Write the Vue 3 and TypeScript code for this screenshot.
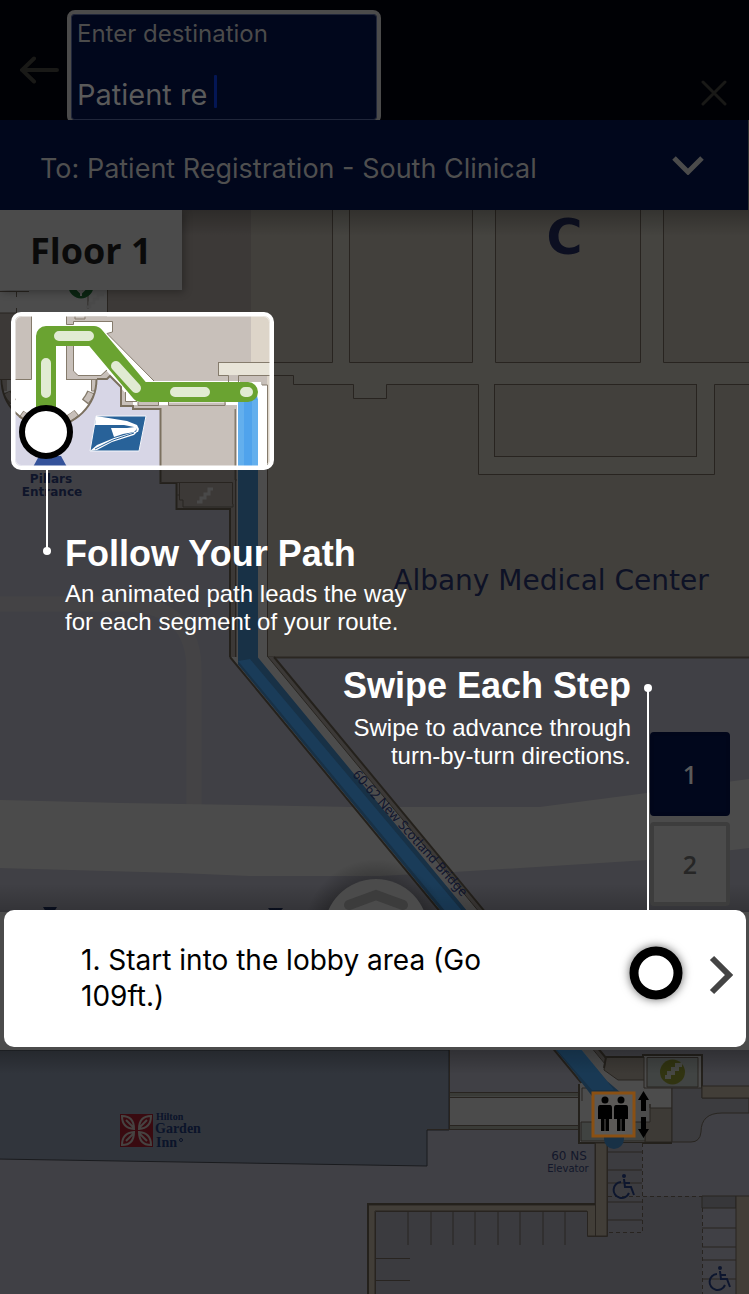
<script setup lang="ts">
import { ref } from 'vue'

interface Floor {
  id: number
  label: string
}

const destination = ref<string>('Patient re')
const activeFloor = ref<number>(1)
const floors: Floor[] = [
  { id: 1, label: '1' },
  { id: 2, label: '2' },
]
const stalls: number[] = [408, 431, 453, 475, 498, 520, 543, 565]
const accessibleStalls: number[] = [1152, 1170, 1183, 1202, 1220]
const rightStalls: number[] = [1228, 1247, 1260, 1279]
</script>

<template>
  <main class="app">
    <header class="search-bar">
      <button class="icon-button back" type="button" aria-label="Back">
        <svg width="40" height="28" viewBox="0 0 40 28">
          <path d="M2 14H37M14 2.500L2 14L14 25.500" class="stroke-dim" />
        </svg>
      </button>
      <div class="field">
        <label for="destination">Enter destination</label>
        <input id="destination" v-model="destination" type="text" autocomplete="off" />
        <span class="caret"></span>
      </div>
      <button class="icon-button clear" type="button" aria-label="Clear">
        <svg width="26" height="26" viewBox="0 0 26 26">
          <path d="M2 2L24 24M24 2L2 24" class="stroke-dim" />
        </svg>
      </button>
    </header>

    <button class="destination-bar" type="button">
      <span>To: Patient Registration - South Clinical</span>
      <svg width="32" height="20" viewBox="0 0 32 20">
        <path d="M2 3L16 17L30 3" fill="none" stroke="#4b4b4b" stroke-width="5" />
      </svg>
    </button>

    <section class="stage">
      <svg class="map" viewBox="0 210 749 1084" preserveAspectRatio="xMidYMin slice" role="img" aria-label="Floor map">
        <defs>
          <clipPath id="spot"><rect x="14" y="315" width="257" height="152" rx="7" /></clipPath>
          <linearGradient id="fadeDown" x1="0" y1="0" x2="0" y2="1">
            <stop offset="0" stop-color="#000" stop-opacity="0.25" />
            <stop offset="1" stop-color="#000" stop-opacity="0" />
          </linearGradient>
          <linearGradient id="fadeUp" x1="0" y1="1" x2="0" y2="0">
            <stop offset="0" stop-color="#000" stop-opacity="0.2" />
            <stop offset="1" stop-color="#000" stop-opacity="0" />
          </linearGradient>
          <radialGradient id="halo">
            <stop offset="0.7" stop-color="#000" stop-opacity="0.25" />
            <stop offset="1" stop-color="#000" stop-opacity="0" />
          </radialGradient>
          <g id="wheelchair">
            <circle cx="10" cy="2" r="2" fill="#2c4a9a" />
            <path d="M10 5L11 13H17L20 21M11 9H16M7 8A8 8 0 1 0 15 19" fill="none" stroke="#2c4a9a" stroke-width="2" />
          </g>
        </defs>

        <g id="scene">
          <rect x="0" y="210" width="749" height="1084" fill="#d7d6e6" />

          <!-- side road and main road -->
          <path d="M0 604H130Q194 608 194 670V806" fill="none" stroke="#e3e2e8" stroke-width="15" />
          <path d="M0 800L120 803L350 807H540L647 793L749 779V848L647 860L470 871L380 876H250L180 873L0 868Z" fill="#fcfcfa" />

          <!-- main hospital building -->
          <path d="M251 210H749V657H267V385H251Z" fill="#ddd5c9" />
          <path d="M218 362H333V210H349V362H473V210H495V362H640V210H663V362H749V384H714V474H478V384H386V398H354V384H293V375H239V382H228V375H218Z" fill="#e8e4d8" />
          <path class="wall" d="M218 362.500H332.500V210M349.500 210V362.500H472.500V210M495.500 210V362.500H640.500V210M663.500 210V362.500H749M749 384.500H714.500V474.500H478.500V384.500H386.500V398.500H353.500V384.500H293.500V375.500H267" />
          <rect class="wall" x="494.500" y="384.500" width="202" height="72" style="fill: #ddd5c9" />

          <!-- west wing -->
          <path d="M107 210H251V362H218V375H267V657H230V509H176V483H160V409H133V406H121V387L110 376L107 379H66V313H107Z" fill="#c8c0ba" />
          <path d="M0 290H107V313H0Z" fill="#fff" />
          <path d="M0 313H32V379H0Z" fill="#c8c0ba" />
          <path d="M0 291.500H29M16.500 291V297M16.500 308V313H0M88 290V309M107.500 290V313" class="wall" />
          <path d="M32 300H66V380H32Z" fill="#fff" />
          <path d="M2 379A47 47 0 0 0 96 379Z" fill="#fff" />
          <path d="M5 379V391M94 379V391" stroke="#c8c0ba" stroke-width="4" />
          <path d="M7 392A43 43 0 0 0 13 402M21 414A44 44 0 0 0 30 419M68 419A44 44 0 0 0 77 413M85 402A44 44 0 0 0 91 392" fill="none" stroke="#857b6c" stroke-width="8" />
          <path d="M7 393A43 43 0 0 0 13 401M22 414A44 44 0 0 0 29 418M69 418A44 44 0 0 0 76 413M86 401A44 44 0 0 0 91 393" fill="none" stroke="#c8c0ba" stroke-width="6" />
          <path d="M1.500 379A47.500 47.500 0 0 0 96.500 379" fill="none" stroke="#7b705f" stroke-width="2" />
          <path d="M0 379.500H31.500V313M66 379.500H96M91.500 379V391H95M66.500 379.500V345" class="wall" />
          <path d="M66 313V324.500H73V322H112.500V332L107 333.500L154 381H240V405H226V402.500H168V405H158V402H138V405H133V401H126V394L106 370L101 375H78L73 371V345H66Z" fill="#fff" />
          <path d="M66 346H73V379H66Z" fill="#c8c0ba" />
          <path d="M66.500 316V324.500H73.500V321.500H112.500V332L107 333.500L154 381M73.500 345V371L78 375.500H101L107 370M75 313V319H85V316H107M168.500 402V405.500H225V402M138 402V405.500H158.500V402M66.500 345V379" class="wall" />
          <path d="M218.500 375V362.500H267M218 375.500H228.500V382M238.500 382V375.500H267" class="wall" />
          <path d="M97 379H107L110 376L121 387V406H133V409H160.500V483H176.500V509H230V657" fill="none" stroke="#7b705f" stroke-width="2" />
          <path d="M125.500 392V401.500H137" class="wall" />
          <path d="M160 482.500H232.500V504H233V507H183V500H179.500V482M177 495H179M235 409V480H238" class="wall" />
          <path d="M197 502H201V498H205V494H209V489H213" fill="none" stroke="#f5f5f5" stroke-width="3" />
          <path d="M86 307H90V303H94V299H98V295H104" fill="none" stroke="#f5f5f5" stroke-width="3" />
          <circle cx="81" cy="286" r="12.500" fill="#25803e" />
          <path d="M81 284V296M77 289L81 293L85 289" fill="none" stroke="#fff" stroke-width="2" />

          <!-- bridge -->
          <path d="M237 382H263V385H267V657H237Z" fill="#fff" />
          <path d="M262 382V385H267.500V657M235.500 409V657" class="wall" />
          <path d="M267 657.500H749" fill="none" stroke="#8f8474" stroke-width="2" />
          <path d="M230 657H274L621 1076L600 1104Z" fill="#fff" />
          <path d="M268 657H274L617 1071L612 1072Z" fill="#c8c0ba" />
          <path d="M230 657L584 1086M274 657L611 1064" fill="none" stroke="#7b705f" stroke-width="2" />
          <path d="M268 657L610 1070" class="wall" />
        </g>

        <g id="lower">
          <!-- hotel -->
          <path d="M-4 1050H449V1130H427V1166L-4 1159Z" fill="#a5b1c8" stroke="#555a64" stroke-width="1" />
          <path d="M449 1092H579V1130H449Z" fill="#fbfbfb" />
          <path d="M449 1094.500H579M449 1128H579" stroke="#c2c5b8" stroke-width="4" />
          <path d="M449.500 1050V1130M449 1092.500H579M449 1097.500H579M449 1125.500H579M427 1129.500H579" class="wall" />
          <rect x="120" y="1114" width="33" height="33" fill="#c02238" />
          <g fill="none" stroke="#eadfda" stroke-width="2">
            <path d="M134 1129Q122 1128 122 1116Q134 1116 134 1129ZM139 1129Q139 1116 151 1116Q151 1128 139 1129ZM134 1132Q134 1145 122 1145Q122 1133 134 1132ZM139 1132Q151 1133 151 1145Q139 1145 139 1132ZM126 1120L134 1128M147 1120L139 1128M126 1141L134 1133M147 1141L139 1133" />
          </g>
          <g font-family="'Liberation Serif', serif" font-weight="700" fill="#25438c">
            <text x="156" y="1120" font-size="10">Hilton</text>
            <text x="155" y="1133" font-size="14">Garden</text>
            <text x="156" y="1147" font-size="14">Inn</text>
          </g>
          <circle cx="181" cy="1140" r="1.500" fill="none" stroke="#25438c" />

          <!-- elevator lobby -->
          <path d="M579 1084L600 1075L612 1057H643V1055H702V1088H672V1143H579Z" fill="#fff" />
          <path d="M606 1057H644V1080H618L604 1070Z" fill="#cdc2b6" class="outlined" />
          <path d="M647 1057.500H698V1087H647Z" fill="#dbe3df" class="outlined" />
          <path d="M650 1104V1108H672V1142H645V1122H650Z" fill="#cdc2b6" class="outlined" />
          <path d="M581 1122H645V1141H581Z" fill="#d6dfda" class="outlined" />
          <path d="M582 1101V1088H592M644 1080V1088H672V1108" class="wall" />
          <path d="M579 1084V1143H672M606 1057H643V1055H702V1088M606 1057L604 1068" fill="none" stroke="#7b705f" stroke-width="2" />
          <path d="M672 1088H702V1098H749V1113H722Q701 1113 701 1132Q700 1142 691 1142H672Z" fill="#c9c8d2" class="outlined" />
          <path d="M702 1086H752V1098H702Z" fill="#ddd0bc" class="outlined" />
          <circle cx="672.500" cy="1072" r="12.500" fill="#a5b03b" />
          <path d="M665 1077H669V1073H673V1069H677V1065H682" fill="none" stroke="#eef0e4" stroke-width="4" />

          <!-- parking -->
          <path d="M368 1205H595V1143H607V1236H587V1211H375V1298H368Z" fill="#ddd0bc" class="outlined" />
          <path d="M375 1211H587V1236H607V1196H702V1294H375Z" fill="#c6c5d4" />
          <path d="M607 1143H642V1232H607Z" fill="#c9c8d6" />
          <path d="M702 1196H736V1208H702Z" fill="#b9b8c4" class="outlined" />
          <path d="M736 1196H752V1298H736Z" fill="#ddd0bc" class="outlined" />
          <path d="M375.500 1294V1211.500H587.500V1236.500H607.500V1143M595.500 1143V1236" class="wall" />
          <path d="M368 1294V1204H595" fill="none" stroke="#7b705f" stroke-width="2" />
          <line v-for="x in stalls" :key="'s' + x" :x1="x" y1="1211" :x2="x" y2="1245" class="wall" />
          <path d="M375 1258.500H410M375 1280.500H410" class="wall" />
          <line v-for="y in accessibleStalls" :key="'a' + y" x1="608" :y1="y" x2="642" :y2="y" class="wall" />
          <line v-for="y in rightStalls" :key="'r' + y" x1="702" :y1="y" x2="736" :y2="y" class="wall" />
          <path d="M642.500 1143V1232.500H608M608 1196.500H702M702.500 1208V1294" class="wall" stroke-dasharray="4 3" />
          <use href="#wheelchair" x="614" y="1174" />
          <use href="#wheelchair" x="710" y="1266" />
          <path d="M43 907H57L54 912H46ZM268 908H283L280 912H271Z" fill="#22366e" />
        </g>

        <path id="blueRoute" d="M248 400V661L600 1088L614 1100V1139" fill="none" stroke="#50a3ec" stroke-width="20" stroke-linecap="round" />
        <path d="M586 1072L606 1098" stroke="#50a3ec" stroke-width="20" />

        <g fill="#28346e" font-family="'DejaVu Sans', Verdana, sans-serif">
          <text x="564.500" y="254" font-size="49" font-weight="700" text-anchor="middle">C</text>
          <text x="551" y="590" font-size="28" text-anchor="middle" fill="#2f3d80">Albany Medical Center</text>
          <g fill="#34498e" font-size="12" font-weight="700" text-anchor="middle">
            <text x="51" y="483">Pillars</text>
            <text x="52" y="496">Entrance</text>
          </g>
          <text x="569" y="1160" font-size="12" text-anchor="middle" fill="#42518f">60 NS</text>
          <text x="568" y="1172" font-size="10" text-anchor="middle" fill="#42518f">Elevator</text>
          <text transform="translate(352 775) rotate(48)" font-size="13" font-family="'Noto Sans', sans-serif" fill="#3a4c9c">60-62 New Scotland Bridge</text>
        </g>

        <rect x="0" y="210" width="749" height="1084" fill="#000" opacity="0.7" />
        <rect x="0" y="210" width="749" height="26" fill="url(#fadeDown)" />
        <rect x="0" y="884" width="749" height="28" fill="url(#fadeUp)" />
        <rect x="0" y="1050" width="749" height="24" fill="url(#fadeDown)" />

        <!-- route sheen -->
        <path d="M238 661L250 659L463 912H446Z" fill="#226ba6" opacity="0.2" />
        <path d="M557 1050H582L614 1090H592Z" fill="#226ba6" opacity="0.15" />

        <!-- elevator marker -->
        <rect x="593" y="1093" width="41" height="43" fill="#5b5957" stroke="#8a5013" stroke-width="3" />
        <g fill="#000">
          <circle cx="605" cy="1100" r="3.500" />
          <path d="M600 1105H610Q612 1105 612 1108V1119H609V1131H605.500V1119H604.500V1131H601V1119H598V1108Q598 1105 600 1105Z" />
          <circle cx="621" cy="1100" r="3.500" />
          <path d="M616 1105H626Q628 1105 628 1108V1119H625V1131H621.500V1119H620.500V1131H617V1119H614V1108Q614 1105 616 1105Z" />
          <path d="M643.500 1091L649 1100H646V1111H641V1100H638ZM643.500 1138L649 1129H646V1117H641V1129H638Z" />
        </g>

        <!-- drawer handle -->
        <circle cx="376" cy="931" r="72" fill="url(#halo)" />
        <circle cx="376" cy="931" r="52" fill="#4b4b4b" />
        <path d="M349 905L376 895L403 905" fill="none" stroke="#3c3c3c" stroke-width="10" stroke-linecap="round" />

        <!-- highlighted segment -->
        <g clip-path="url(#spot)">
          <use href="#scene" />
          <use href="#blueRoute" />
          <path d="M241 400V470M255 400V470" stroke="#6cb4ee" stroke-width="6" opacity="0.7" />
          <path d="M39 456H61L67 467H33Z" fill="#34529a" />
          <path d="M96 416H146L139 451H90Z" fill="#286299" stroke="#f4f6fb" />
          <path d="M96 416L127 421L137 425L139 429L138 432L136 432L137 429L134 427L124 425H95Z" fill="#fff" />
          <path d="M111 428H127L135 427L137 429L134 432L123 434L114 437Z" fill="#fff" />
          <path d="M90 451L97 445L114 438L138 431L134 435L112 442L97 450Z" fill="#fff" />
          <path d="M95 449L113 440L134 433" fill="none" stroke="#286299" stroke-width="1" />
          <path d="M46 420V336H94L141 392H248" fill="none" stroke="#6aa331" stroke-width="20" stroke-linecap="round" stroke-linejoin="round" />
          <path d="M46 363V393M59 336H89M116 366L136 388M175 392H205M245 392H248" fill="none" stroke="#e1ebd3" stroke-width="10" stroke-linecap="round" />
        </g>
        <rect x="15.500" y="316.500" width="254" height="149" rx="6" fill="none" stroke="#fff" opacity="0.5" />
        <rect x="13" y="314" width="259" height="154" rx="8" fill="none" stroke="#fff" stroke-width="4" />
        <circle cx="46" cy="432" r="24" fill="#fff" stroke="#000" stroke-width="6" />
        <path d="M47 470V551" stroke="#fff" stroke-width="2" />
        <circle cx="47" cy="551" r="4" fill="#fff" />
      </svg>

      <div class="map-top">
        <h1 class="floor-badge">Floor 1</h1>
        <article class="tip tip-path">
          <h2>Follow Your Path</h2>
          <p>An animated path leads the way<br />for each segment of your route.</p>
        </article>
        <nav class="floors" aria-label="Floors">
          <button
            v-for="floor in floors"
            :key="floor.id"
            type="button"
            :class="{ active: floor.id === activeFloor }"
            @click="activeFloor = floor.id"
          >{{ floor.label }}</button>
        </nav>
        <article class="tip tip-step">
          <h2>Swipe Each Step</h2>
          <p>Swipe to advance through<br />turn-by-turn directions.</p>
        </article>
        <span class="leader"></span>
      </div>

      <div class="step-strip">
        <article class="step-card">
          <p>1. Start into the lobby area (Go 109ft.)</p>
          <svg class="start" width="66" height="66" viewBox="0 0 66 66" aria-hidden="true">
            <circle cx="33" cy="33" r="22" fill="#fff" stroke="#000" stroke-width="9" />
          </svg>
          <button class="next" type="button" aria-label="Next step">
            <svg width="26" height="40" viewBox="0 0 26 40">
              <path d="M3 3L20 20L3 37" fill="none" stroke="#444" stroke-width="6" />
            </svg>
          </button>
        </article>
      </div>
    </section>
  </main>
</template>

<style>
body {
  margin: 0;
  background: #414044;
}
</style>

<style scoped>
.app {
  display: flex;
  flex-direction: column;
  min-height: 100vh;
  overflow: hidden;
  font-family: Inter, 'Liberation Sans', sans-serif;
}

button {
  padding: 0;
  border: 0;
  background: none;
  font: inherit;
  cursor: pointer;
}

svg {
  display: block;
}

.stroke-dim {
  fill: none;
  stroke: #191917;
  stroke-width: 4;
  stroke-linecap: round;
}

.search-bar {
  display: flex;
  height: 120px;
  box-sizing: border-box;
  padding: 10px 22px 0 20px;
  overflow: hidden;
  background: #000105;
}

.back {
  align-self: flex-start;
  margin: 46px 7px 0 0;
}

.field {
  position: relative;
  box-sizing: border-box;
  flex: 0 1 314px;
  height: 114px;
  padding: 8px 6px 0;
  border: 4px solid #4b4b4b;
  border-radius: 8px;
  background: #01071c;
  box-shadow: inset 0 0 0 1px #20263a;
}

.field label {
  display: block;
  color: #4b4b4b;
  font-size: 24px;
  line-height: 24px;
}

.field input {
  display: block;
  width: 100%;
  height: 36px;
  margin-top: 31px;
  padding: 0;
  border: 0;
  outline: 0;
  background: none;
  color: #5a5a5a;
  font: 29px/36px Inter, 'Liberation Sans', sans-serif;
}

.caret {
  position: absolute;
  top: 61px;
  left: 143px;
  width: 3px;
  height: 33px;
  border-radius: 1px;
  background: #041654;
}

.clear {
  align-self: flex-end;
  margin: 0 0 14px auto;
}

.clear .stroke-dim {
  stroke-width: 3;
}

.destination-bar {
  display: flex;
  align-items: center;
  justify-content: space-between;
  height: 90px;
  padding: 0 44px 0 40px;
  border-right: 1px solid #333;
  background: #01071c;
  color: #4f4f4f;
  font-size: 27px;
  line-height: 36px;
}

.destination-bar span {
  padding-top: 8px;
}

.stage {
  position: relative;
  flex: 1;
  overflow: hidden;
}

.map {
  position: absolute;
  inset: 0;
  width: 100%;
  height: 100%;
}

.wall {
  fill: none;
  stroke: #857b6c;
  stroke-width: 1;
}

.outlined {
  stroke: #857b6c;
  stroke-width: 1;
}

.map-top {
  position: relative;
  height: 700px;
}

.floor-badge {
  box-sizing: border-box;
  width: 182px;
  height: 80px;
  margin: 0;
  padding-left: 30px;
  background: #4b4b4b;
  box-shadow: 2px 2px 8px rgba(0, 0, 0, 0.3);
  color: #0a0a0a;
  font: 700 36px/82px 'Open Sans', 'Noto Sans', sans-serif;
}

.tip {
  position: absolute;
  color: #fff;
  font-family: 'Liberation Sans', Arial, sans-serif;
}

.tip h2 {
  margin: 0;
  font-size: 36px;
  line-height: 40px;
}

.tip p {
  margin: 6px 0 0;
  font-size: 24px;
  line-height: 28px;
}

.tip-path {
  top: 324px;
  left: 65px;
}

.tip-step {
  top: 456px;
  right: 118px;
  text-align: right;
}

.tip-step p {
  margin-top: 8px;
}

.leader {
  position: absolute;
  top: 478px;
  right: 100px;
  bottom: 0;
  width: 2px;
  background: #fff;
}

.leader::before {
  content: '';
  position: absolute;
  top: -4px;
  left: -3px;
  width: 8px;
  height: 8px;
  border-radius: 50%;
  background: #fff;
}

.floors {
  position: absolute;
  top: 522px;
  right: 19px;
  display: grid;
  gap: 6px;
}

.floors button {
  box-sizing: border-box;
  width: 80px;
  height: 84px;
  border: 4px solid #3d3d3d;
  border-radius: 4px;
  background: #4b4b4b;
  color: #262626;
  font: 600 25px/32px 'Open Sans', 'Noto Sans', sans-serif;
}

.floors .active {
  border-color: #01061a;
  background: #01071c;
  color: #5a5a5a;
}

.step-strip {
  position: relative;
  padding: 0 3px 3px 4px;
  background: linear-gradient(transparent 2px, #4b4b4b 2px);
}

.step-card {
  display: flex;
  box-sizing: border-box;
  min-height: 137px;
  padding: 30px 11px 0 77px;
  border-radius: 10px;
  background: #fff;
}

.step-card p {
  flex: 1;
  max-width: 420px;
  margin: 2px auto 0 0;
  color: #000;
  font-size: 28px;
  line-height: 36px;
}

.start {
  filter: drop-shadow(0 0 5px rgba(0, 0, 0, 0.6));
}

.next {
  align-self: flex-start;
  margin: 15px 0 0 20px;
}
</style>
